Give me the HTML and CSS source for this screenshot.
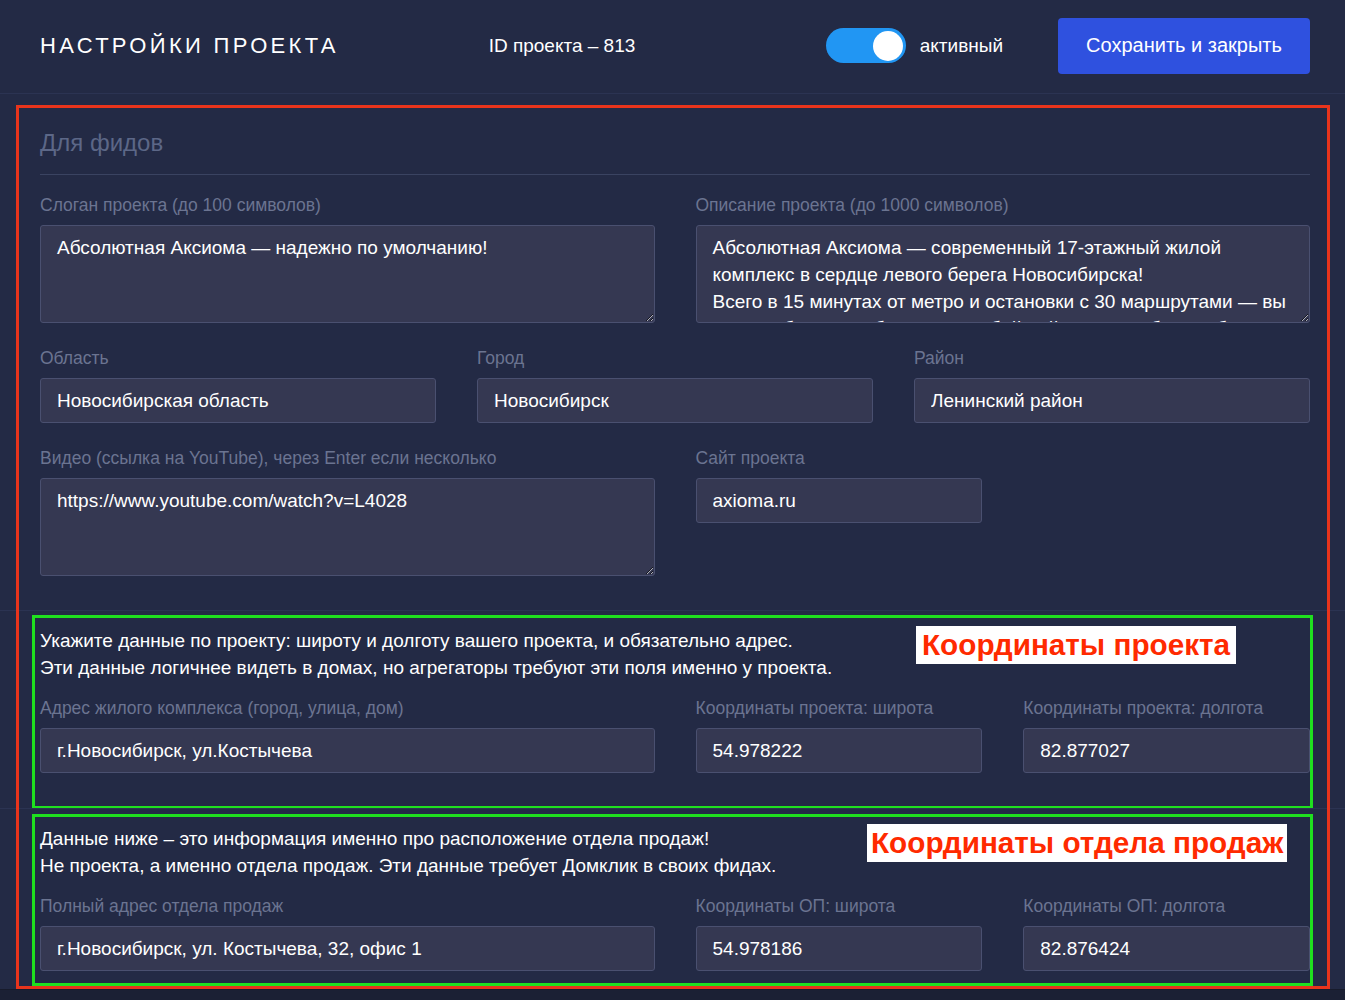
FILE: index.html
```html
<!DOCTYPE html>
<html lang="ru">
<head>
  <meta charset="utf-8">
  <title>Настройки проекта</title>
  <link rel="stylesheet" href="styles.css">
</head>
<body>
  <div class="page">
    <header class="topbar">
      <h1 class="title">НАСТРОЙКИ ПРОЕКТА</h1>
      <span class="project-id">ID проекта – 813</span>
      <div class="spacer"></div>
      <label class="switch-wrap">
        <span class="switch"><span class="knob"></span></span>
        активный
      </label>
      <button class="btn-save">Сохранить и закрыть</button>
    </header>

    <!-- Для фидов -->
    <section class="section section-feeds">
      <h2 class="section-title">Для фидов</h2>

      <div class="row cols-2">
        <div class="field">
          <label>Слоган проекта (до 100 символов)</label>
          <textarea class="control area">Абсолютная Аксиома — надежно по умолчанию!</textarea>
        </div>
        <div class="field">
          <label>Описание проекта (до 1000 символов)</label>
          <textarea class="control area">Абсолютная Аксиома — современный 17-этажный жилой комплекс в сердце левого берега Новосибирска!
Всего в 15 минутах от метро и остановки с 30 маршрутами — вы можете быстро добраться в любой район города без пробок.</textarea>
        </div>
      </div>

      <div class="row cols-3">
        <div class="field">
          <label>Область</label>
          <input class="control" value="Новосибирская область">
        </div>
        <div class="field">
          <label>Город</label>
          <input class="control" value="Новосибирск">
        </div>
        <div class="field">
          <label>Район</label>
          <input class="control" value="Ленинский район">
        </div>
      </div>

      <div class="row cols-2">
        <div class="field">
          <label>Видео (ссылка на YouTube), через Enter если несколько</label>
          <textarea class="control area">https://www.youtube.com/watch?v=L4028</textarea>
        </div>
        <div class="sub-grid">
          <div class="field">
            <label>Сайт проекта</label>
            <input class="control" value="axioma.ru">
          </div>
        </div>
      </div>
    </section>

    <!-- Координаты проекта -->
    <section class="section">
      <p class="intro">Укажите данные по проекту: широту и долготу вашего проекта, и обязательно адрес.<br>
        Эти данные логичнее видеть в домах, но агрегаторы требуют эти поля именно у проекта.</p>
      <div class="row cols-2">
        <div class="field">
          <label>Адрес жилого комплекса (город, улица, дом)</label>
          <input class="control" value="г.Новосибирск, ул.Костычева">
        </div>
        <div class="sub-grid">
          <div class="field">
            <label>Координаты проекта: широта</label>
            <input class="control" value="54.978222">
          </div>
          <div class="field">
            <label>Координаты проекта: долгота</label>
            <input class="control" value="82.877027">
          </div>
        </div>
      </div>
      <div class="mark-green green-1"></div>
      <div class="note note-1">Координаты проекта</div>
    </section>

    <!-- Координаты отдела продаж -->
    <section class="section section-last">
      <p class="intro">Данные ниже – это информация именно про расположение отдела продаж!<br>
        Не проекта, а именно отдела продаж. Эти данные требует Домклик в своих фидах.</p>
      <div class="row cols-2">
        <div class="field">
          <label>Полный адрес отдела продаж</label>
          <input class="control" value="г.Новосибирск, ул. Костычева, 32, офис 1">
        </div>
        <div class="sub-grid">
          <div class="field">
            <label>Координаты ОП: широта</label>
            <input class="control" value="54.978186">
          </div>
          <div class="field">
            <label>Координаты ОП: долгота</label>
            <input class="control" value="82.876424">
          </div>
        </div>
      </div>
      <div class="mark-green green-2"></div>
      <div class="note note-2">Координаты отдела продаж</div>
    </section>

    <div class="mark-red"></div>
  </div>
</body>
</html>
```

FILE: styles.css
```css
* {
  box-sizing: border-box;
  margin: 0;
  padding: 0;
  font-family: "Liberation Sans", Arial, sans-serif;
}

body {
  background: #1b2034;
  color: #fff;
  width: 1345px;
  height: 1000px;
  overflow: hidden;
}

.page {
  position: relative;
  background: #232a45;
}

/* header */
.topbar {
  display: flex;
  align-items: center;
  height: 94px;
  padding: 0 35px 2px 40px;
  border-bottom: 1px solid #2b3352;
}

.title {
  font-size: 22px;
  font-weight: 400;
  letter-spacing: 3.3px;
}

.project-id {
  margin-left: 150px;
  font-size: 19px;
}

.spacer {
  flex: 1;
}

.switch-wrap {
  display: flex;
  align-items: center;
  gap: 14px;
  font-size: 19px;
}

.switch {
  display: flex;
  justify-content: flex-end;
  align-items: center;
  width: 80px;
  height: 35px;
  padding: 0 3px;
  border-radius: 18px;
  background: #2196f3;
}

.knob {
  width: 30px;
  height: 30px;
  border-radius: 50%;
  background: #fff;
}

.btn-save {
  margin-left: 55px;
  height: 56px;
  width: 252px;
  border: none;
  border-radius: 4px;
  background: #2f51df;
  color: #fff;
  font-size: 20px;
}

/* sections */
.section {
  position: relative;
  padding: 16px 35px 35px 40px;
  border-top: 1px solid #2b3352;
}

.section-feeds {
  border-top: none;
  padding-top: 34px;
  padding-bottom: 34px;
}

.section-last {
  padding-bottom: 18px;
  border-bottom: 1px solid #171b2c;
}

.section-title {
  font-size: 24px;
  line-height: 30px;
  font-weight: 400;
  color: #5c6787;
  padding-bottom: 16px;
  border-bottom: 1px solid #3a4361;
  margin-bottom: 20px;
}

.intro {
  font-size: 19px;
  line-height: 27px;
  margin-bottom: 17px;
}

.row {
  display: grid;
  gap: 41px;
}

.row + .row {
  margin-top: 25px;
}

.cols-2 {
  grid-template-columns: 1fr 1fr;
}

.cols-3 {
  grid-template-columns: 1fr 1fr 1fr;
}

.sub-grid {
  display: grid;
  grid-template-columns: 1fr 1fr;
  gap: 41px;
}

.field label {
  display: block;
  font-size: 17.5px;
  line-height: 20px;
  margin-bottom: 10px;
  color: #6b7491;
}

.control {
  display: block;
  width: 100%;
  height: 45px;
  padding: 0 16px;
  background: #353852;
  border: 1px solid #4a5070;
  border-radius: 3px;
  color: #fff;
  font-size: 19px;
  outline: none;
}

.area {
  height: 98px;
  padding: 8px 16px;
  line-height: 27px;
  resize: vertical;
  overflow: hidden;
}

/* annotation overlays */
.mark-red {
  position: absolute;
  top: 105px;
  left: 16px;
  width: 1314px;
  height: 884px;
  border: 3px solid #e8341c;
  pointer-events: none;
}

.mark-green {
  position: absolute;
  left: 32px;
  width: 1281px;
  border: 3px solid #1fe01f;
  pointer-events: none;
}

.green-1 {
  top: 4px;
  height: 194px;
}

.green-2 {
  top: 5px;
  height: 172px;
}

.note {
  position: absolute;
  top: 15px;
  height: 38px;
  line-height: 38px;
  padding: 0 4px;
  background: #fff;
  color: #ff2a00;
  font-size: 29.7px;
  font-weight: 700;
}

.note-1 {
  left: 916px;
  padding: 0 6px;
}

.note-2 {
  left: 867px;
}
```
